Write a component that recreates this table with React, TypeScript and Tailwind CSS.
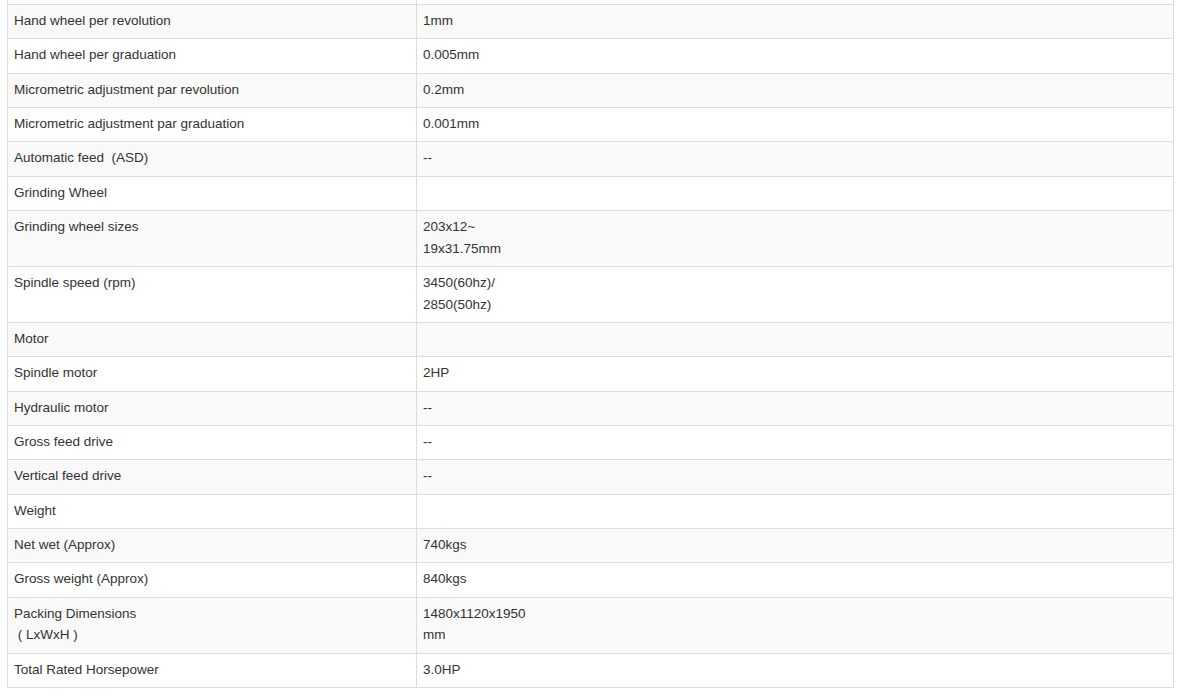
type Spec = { label: string[]; value: string[] };

const specs: Spec[] = [
  { label: ["Hand wheel per revolution"], value: ["1mm"] },
  { label: ["Hand wheel per graduation"], value: ["0.005mm"] },
  { label: ["Micrometric adjustment par revolution"], value: ["0.2mm"] },
  { label: ["Micrometric adjustment par graduation"], value: ["0.001mm"] },
  { label: ["Automatic feed\u00a0 (ASD)"], value: ["--"] },
  { label: ["Grinding Wheel"], value: [] },
  { label: ["Grinding wheel sizes"], value: ["203x12~", "19x31.75mm"] },
  { label: ["Spindle speed (rpm)"], value: ["3450(60hz)/", "2850(50hz)"] },
  { label: ["Motor"], value: [] },
  { label: ["Spindle motor"], value: ["2HP"] },
  { label: ["Hydraulic motor"], value: ["--"] },
  { label: ["Gross feed drive"], value: ["--"] },
  { label: ["Vertical feed drive"], value: ["--"] },
  { label: ["Weight"], value: [] },
  { label: ["Net wet (Approx)"], value: ["740kgs"] },
  { label: ["Gross weight (Approx)"], value: ["840kgs"] },
  { label: ["Packing Dimensions", "\u00a0( LxWxH )"], value: ["1480x1120x1950", "mm"] },
  { label: ["Total Rated Horsepower"], value: ["3.0HP"] },
];

function Cell({ lines, first }: { lines: string[]; first?: boolean }) {
  return (
    <div
      className={
        "px-[6px] pt-[5px] pb-[6.67px] leading-[21.67px] " +
        (first ? "border-r border-[#dddddd]" : "")
      }
    >
      {lines.map((l, i) => (
        <div key={i} className="whitespace-pre">
          {l}
        </div>
      ))}
      {lines.length === 0 && <div>&nbsp;</div>}
    </div>
  );
}

export default function App() {
  return (
    <div className="h-[696px] w-[1180px] overflow-hidden bg-white">
      <div
        className="ml-[7px] w-[1167px] border-x border-b border-[#dddddd] text-[13.5px] text-[#333333]"
        style={{ fontFamily: '"Liberation Sans", Arial, sans-serif' }}
      >
        {/* row cut off at the top of the picture */}
        <div className="grid h-[5px] grid-cols-[409px_1fr] border-b border-[#dddddd]">
          <div className="border-r border-[#dddddd]" />
          <div />
        </div>
        {specs.map((s, i) => (
          <div
            key={i}
            className={
              "grid grid-cols-[409px_1fr] border-b border-[#dddddd] last:border-b-0 " +
              (i % 2 === 0 ? "bg-[#f9f9f9]" : "bg-white")
            }
          >
            <Cell lines={s.label} first />
            <Cell lines={s.value} />
          </div>
        ))}
      </div>
    </div>
  );
}
